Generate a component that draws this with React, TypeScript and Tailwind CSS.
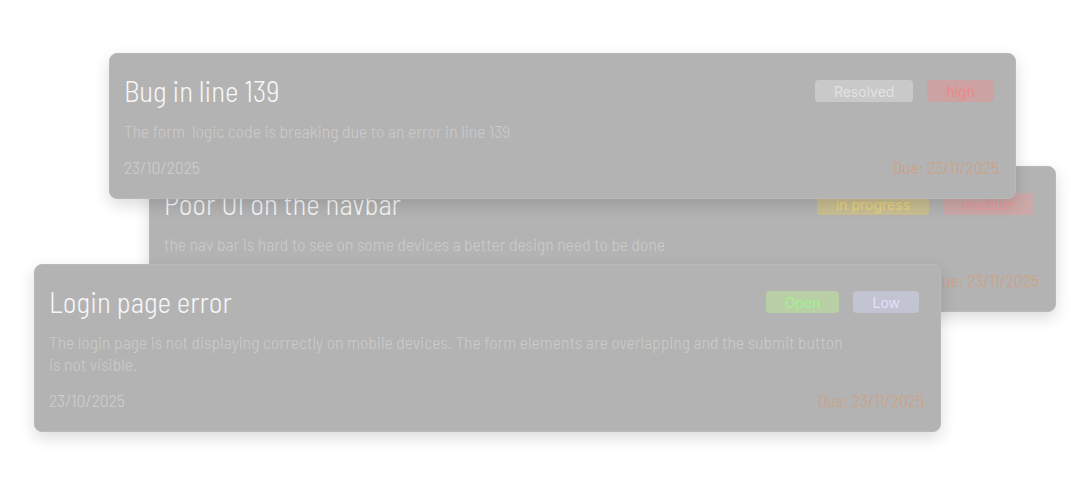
type Badge = { label: string; className: string }

type Ticket = {
  title: string
  description: string
  created: string
  due: string
  badges: Badge[]
  position: string
}

const tickets: Ticket[] = [
  {
    title: 'Poor UI on the navbar',
    description: 'the nav bar is hard to see on some devices a better design need to be done',
    created: '23/10/2025',
    due: 'Due: 23/11/2025',
    badges: [
      { label: 'in progress', className: 'bg-[#c9be92] text-[#e6d47c]' },
      { label: 'medium', className: 'bg-[#cca8a8] text-[#e89a9a]' },
    ],
    position: 'left-[149px] top-[166px] z-0',
  },
  {
    title: 'Bug in line 139',
    description: 'The form  logic code is breaking due to an error in line 139',
    created: '23/10/2025',
    due: 'Due: 23/11/2025',
    badges: [
      { label: 'Resolved', className: 'bg-[#c9c9c9] text-[#e2e2e2]' },
      { label: 'high', className: 'bg-[#cca2a2] text-[#ec8888]' },
    ],
    position: 'left-[109px] top-[53px] z-10',
  },
  {
    title: 'Login page error',
    description:
      'The login page is not displaying correctly on mobile devices. The form elements are overlapping and the submit button is not visible.',
    created: '23/10/2025',
    due: 'Due: 23/11/2025',
    badges: [
      { label: 'Open', className: 'bg-[#b9d0a7] text-[#a2f092]' },
      { label: 'Low', className: 'bg-[#c3c4d1] text-[#e0e0fa]' },
    ],
    position: 'left-[34px] top-[264px] z-20',
  },
]

function TicketCard({ ticket }: { ticket: Ticket }) {
  return (
    <div
      className={`absolute w-[907px] rounded-lg border border-[#b9b9b9] bg-[#b3b3b3] pt-[23px] pr-[16px] pb-[20px] pl-[14px] shadow-[0_6px_16px_rgba(0,0,0,0.14)] ${ticket.position}`}
    >
      <div className="flex items-start justify-between">
        <h2 className="text-[29px] leading-[28px] font-light text-[#f7f7f7]">{ticket.title}</h2>
        <div className="mt-[3px] mr-[5px] flex gap-[14px] font-['Inter',sans-serif]">
          {ticket.badges.map((b) => (
            <span
              key={b.label}
              className={`flex h-[22px] items-center rounded-[4px] px-[19px] text-[14px] ${b.className}`}
            >
              {b.label}
            </span>
          ))}
        </div>
      </div>
      <p className="mt-[15px] max-w-[805px] text-[17.7px] leading-[22px] font-light whitespace-pre-wrap text-[#cbcbcb]">
        {ticket.description}
      </p>
      <div className="mt-[14px] flex justify-between text-[17.7px] leading-[22px] font-light">
        <span className="text-[#cfcfcf]">{ticket.created}</span>
        <span className="text-[#d0a080]">{ticket.due}</span>
      </div>
    </div>
  )
}

export default function App() {
  return (
    <div className="relative h-[483px] w-[1090px] overflow-hidden bg-white font-['Barlow_Semi_Condensed','Barlow',sans-serif]">
      {tickets.map((t) => (
        <TicketCard key={t.title} ticket={t} />
      ))}
    </div>
  )
}
